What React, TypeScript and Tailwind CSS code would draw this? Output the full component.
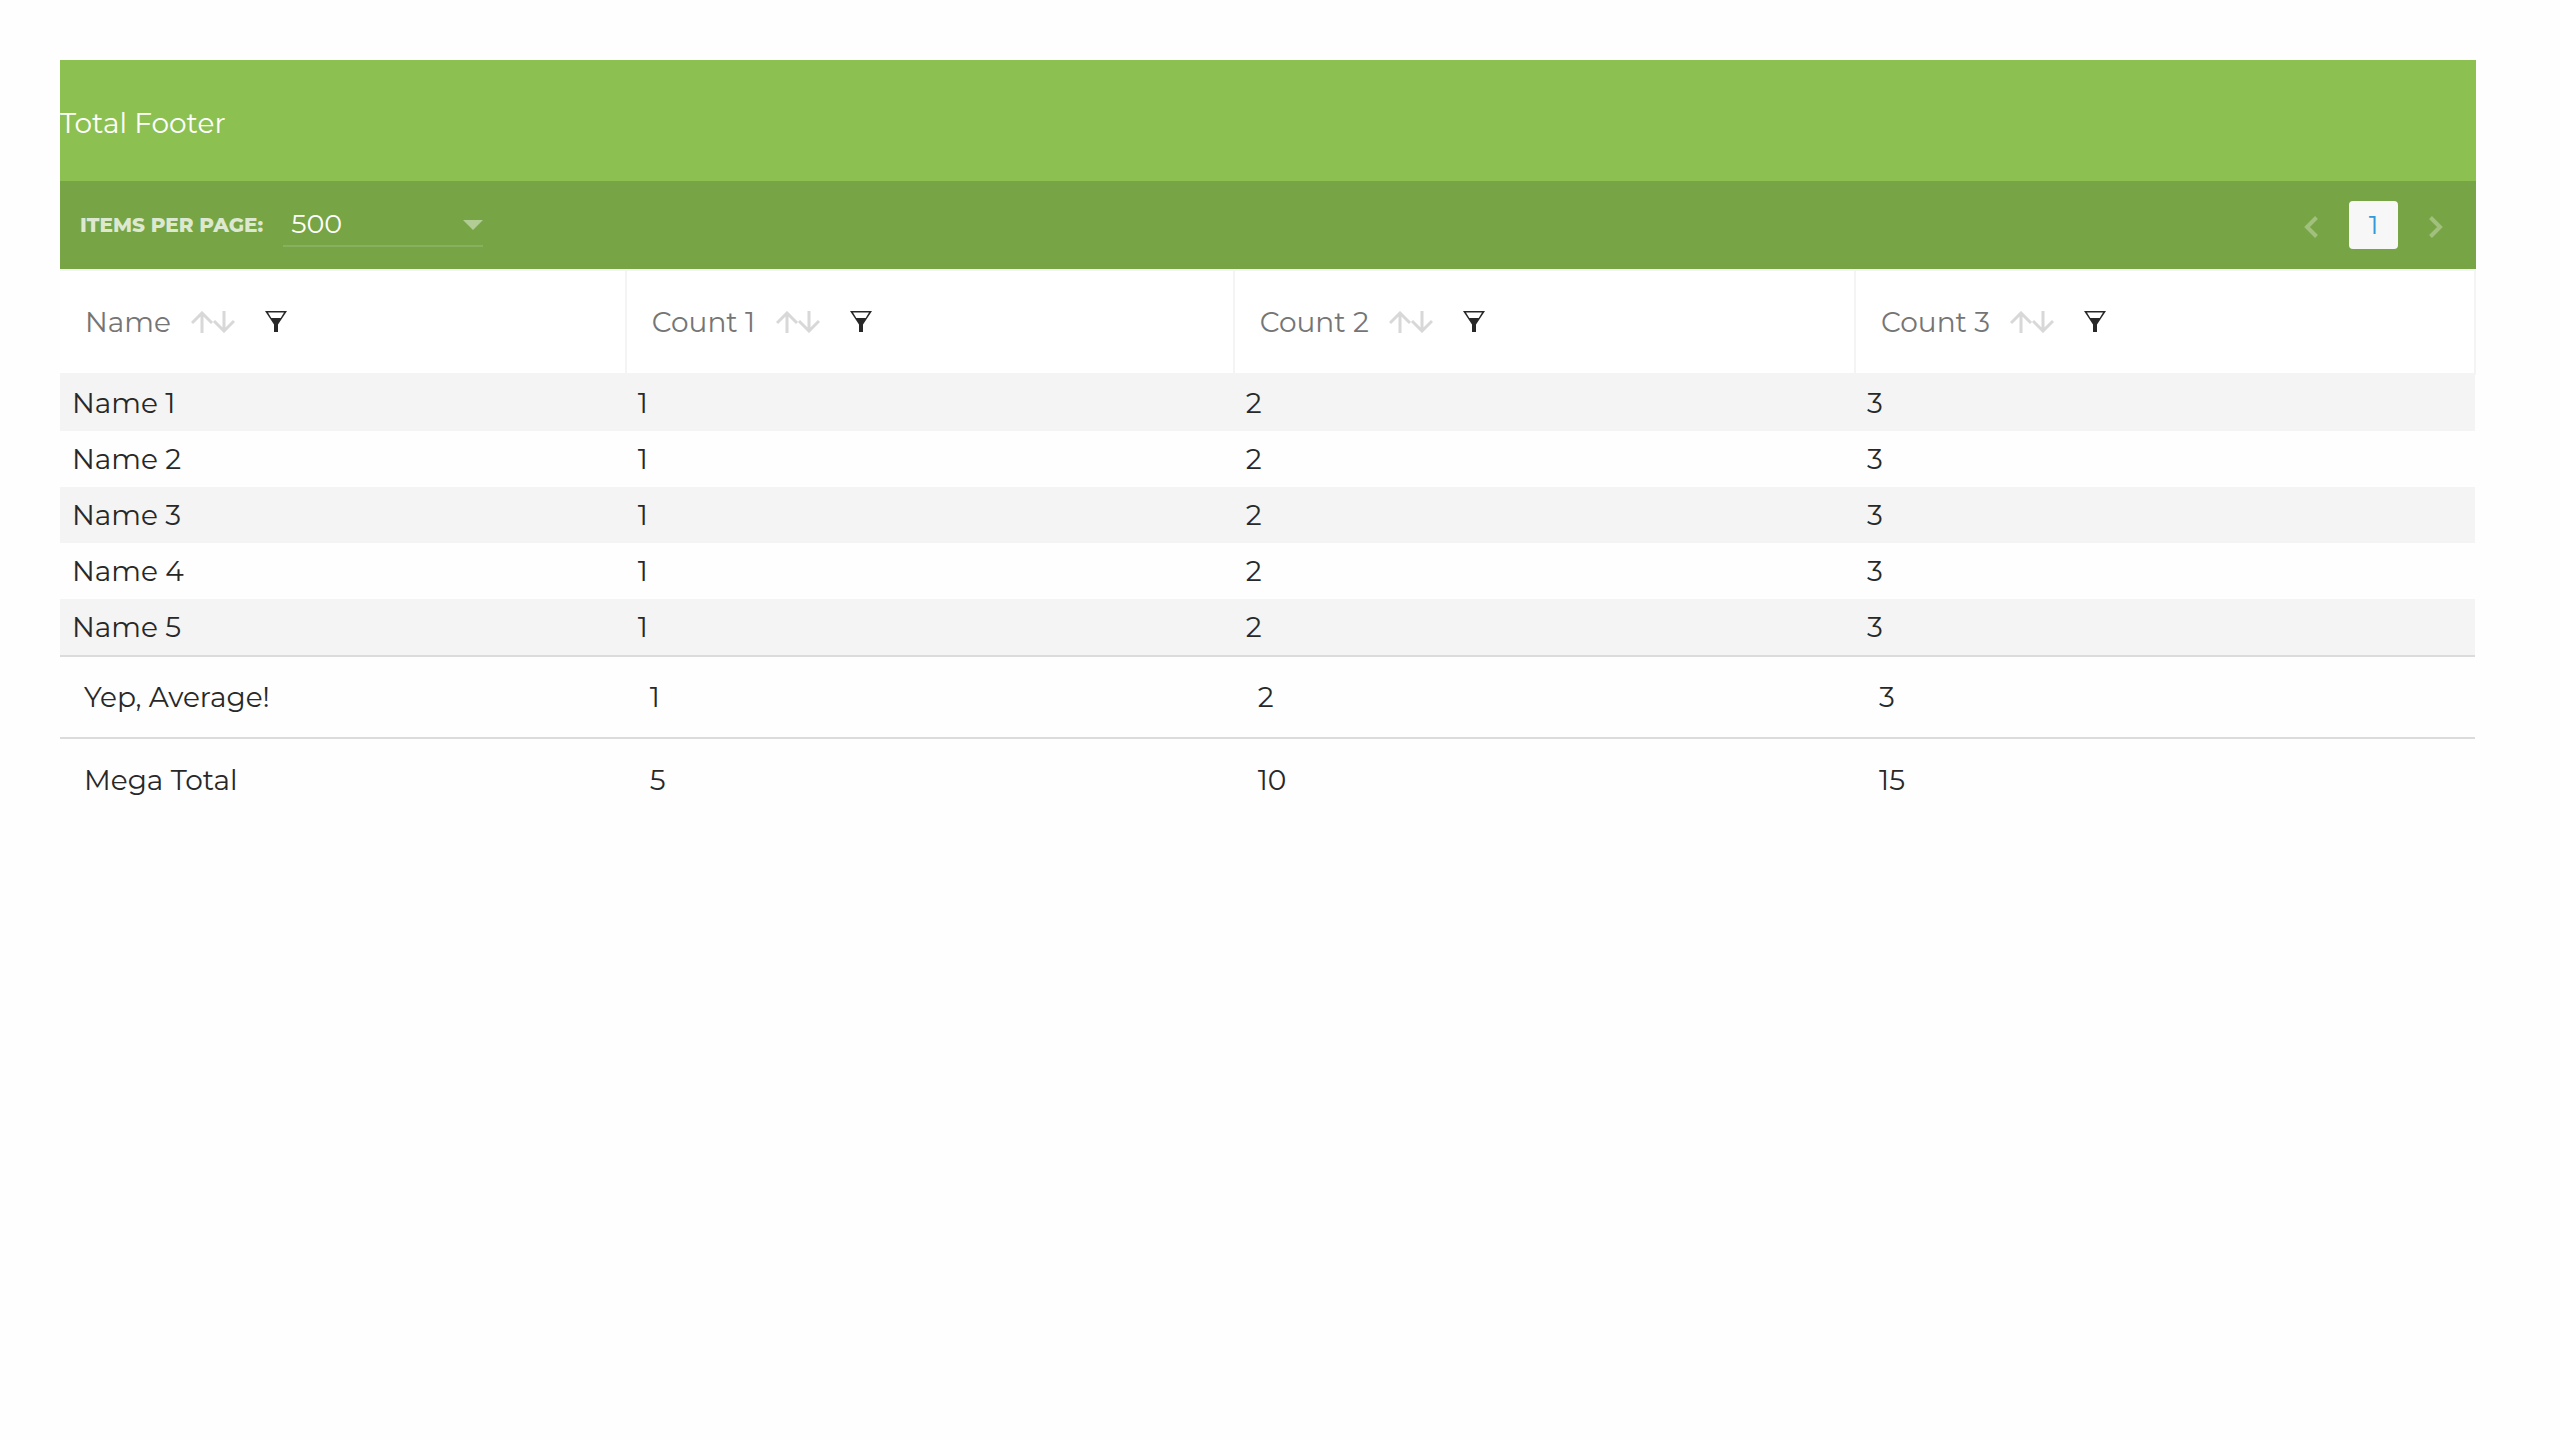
import React from "react";

type Column = { label: string; width: string; labelWidth: string };

const columns: Column[] = [
  { label: "Name", width: "w-[23.43%]", labelWidth: "min-w-[106px]" },
  { label: "Count 1", width: "w-[25.17%]", labelWidth: "min-w-[124px]" },
  { label: "Count 2", width: "w-[25.73%]", labelWidth: "min-w-[129px]" },
  { label: "Count 3", width: "w-[25.67%]", labelWidth: "min-w-[129px]" },
];

const rows = [1, 2, 3, 4, 5].map((n) => [`Name ${n}`, "1", "2", "3"]);

const totals = [
  ["Yep, Average!", "1", "2", "3"],
  ["Mega Total", "5", "10", "15"],
];

function SortIcon() {
  return (
    <svg width="44" height="22" viewBox="0 0 44 22" fill="none" stroke="#d8d8d8" strokeWidth="3" aria-hidden="true">
      <path d="M11 22V2M1 12L11 2L21 12" />
      <path d="M33 0V20M23 10L33 20L43 10" />
    </svg>
  );
}

function FilterIcon() {
  return (
    <svg width="22" height="21" viewBox="0 0 22 21" aria-hidden="true">
      <path
        fill="#282828"
        fillRule="evenodd"
        d="M0 0H22L13 13.500V21H9V13.500ZM3 1.500L6.300 7H15.700L19 1.500Z"
      />
    </svg>
  );
}

function Chevron({ d }: { d: string }) {
  return (
    <svg width="14" height="22" viewBox="0 0 14 22" fill="none" stroke="#a1c07e" strokeWidth="4" aria-hidden="true">
      <path d={d} />
    </svg>
  );
}

function HeaderCell({ label, width, labelWidth }: Column) {
  return (
    <th scope="col" className={`${width} h-[104px] border-2 border-[#f4f4f4] py-0 pr-6 pl-[25px] text-left font-normal text-[#757575] first:border-l-0`}>
      <div className="flex items-center">
        <span className={`${labelWidth} whitespace-nowrap`}>{label}</span>
        <button type="button" aria-label={`Sort by ${label}`} className="mr-[30px]">
          <SortIcon />
        </button>
        <button type="button" aria-label={`Filter ${label}`} className="pb-0.5">
          <FilterIcon />
        </button>
      </div>
    </th>
  );
}

export default function App() {
  return (
    <main className="min-h-screen bg-[#fefefe] pt-[60px] pr-[84px] pb-[60px] pl-[60px] font-['Montserrat','Inter',sans-serif] text-[28px] leading-[32px] text-[#282828]">
      <header className="flex h-[121px] items-center bg-[#8cc152] pt-1 text-white">
        <h1>Total Footer</h1>
      </header>

      <div className="flex h-[88px] items-center justify-between bg-[#77a445] pr-[33px] pl-5">
        <div className="flex items-center gap-5">
          <label htmlFor="per-page" className="text-[20px] leading-[32px] font-extrabold text-[#dde8d1] uppercase">
            Items per page:
          </label>
          <div className="relative">
            <select
              id="per-page"
              defaultValue="500"
              className="block h-11 w-[200px] appearance-none border-b-2 border-[#89b05c] bg-transparent px-2 text-[27px] text-white"
            >
              <option value="500">500</option>
            </select>
            <svg className="pointer-events-none absolute top-[17px] right-0" width="20" height="10" viewBox="0 0 20 10" aria-hidden="true">
              <path d="M0 0H20L10 10Z" fill="#b1cc95" />
            </svg>
          </div>
        </div>
        <nav aria-label="Pagination" className="flex items-center gap-[31px]">
          <button type="button" aria-label="Previous page" className="pt-1">
            <Chevron d="M12.500 1.500L3 11L12.500 20.500" />
          </button>
          <button type="button" aria-current="page" className="h-12 w-[49px] rounded bg-[#f7f7f7] text-[27px] text-[#3499db]">
            1
          </button>
          <button type="button" aria-label="Next page" className="pt-1">
            <Chevron d="M1.500 1.500L11 11L1.500 20.500" />
          </button>
        </nav>
      </div>

      <table className="w-full table-fixed border-collapse">
        <thead>
          <tr className="bg-white">
            {columns.map((c) => (
              <HeaderCell key={c.label} {...c} />
            ))}
          </tr>
        </thead>
        <tbody>
          {rows.map((row) => (
            <tr key={row[0]} className="h-14 first:h-[57px] last:h-[57px] odd:bg-[#f4f4f4]">
              {row.map((v, i) => (
                <td key={i} className="px-3 py-0">{v}</td>
              ))}
            </tr>
          ))}
        </tbody>
        <tfoot>
          {totals.map((row) => (
            <tr key={row[0]} className="h-[82px] border-t-2 border-[#dbdbdb]">
              {row.map((v, i) => (
                <td key={i} className="px-6 py-0">{v}</td>
              ))}
            </tr>
          ))}
        </tfoot>
      </table>
    </main>
  );
}
